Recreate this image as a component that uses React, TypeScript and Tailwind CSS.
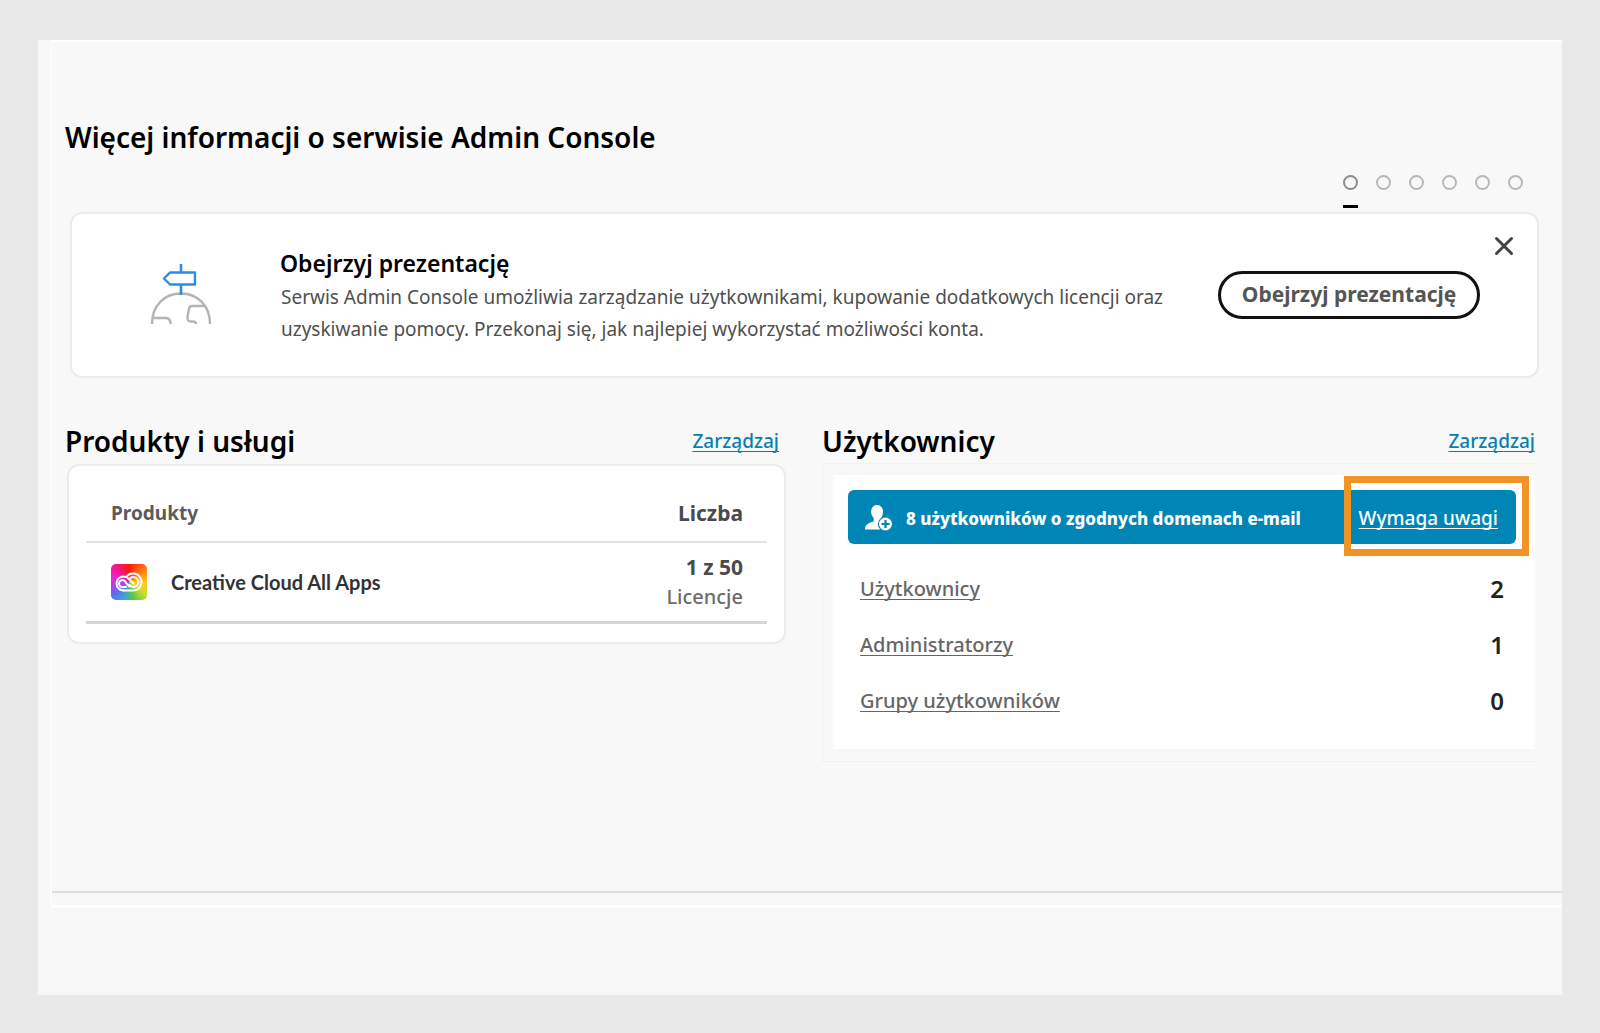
import React from 'react';
import { clsx } from 'clsx';

const SLIDES = ['1', '2', '3', '4', '5', '6'];

const USER_STATS = [
  { label: 'Użytkownicy', value: 2 },
  { label: 'Administratorzy', value: 1 },
  { label: 'Grupy użytkowników', value: 0 },
];

const SignpostIcon = () => (
  <svg className="w-[64px] h-[66px] mb-[2px] shrink-0" viewBox="0 0 64 66" fill="none" aria-hidden="true">
    <path d="M3 63C3 44 16 32.500 32 32.500S61 44 61 63" stroke="#b4b4b4" strokeWidth="2.400" />
    <path d="M4 57H17Q20 57 21 60L22 63" stroke="#b4b4b4" strokeWidth="2.400" />
    <path d="M56 45H43Q40.500 45 40 47.500L38.500 56Q38 60.500 42 60.500H44Q47 60.500 47 63" stroke="#b4b4b4" strokeWidth="2.400" />
    <path d="M32 3V11M32 24V34" stroke="#2d8ceb" strokeWidth="2.600" />
    <path d="M21 11.500H46V23.500H21L15 17.500Z" stroke="#2d8ceb" strokeWidth="2.400" strokeLinejoin="round" />
  </svg>
);

const CreativeCloudIcon = () => (
  <div className="w-9 h-9 shrink-0 rounded-[5px] overflow-hidden bg-[conic-gradient(from_0deg,#fb1a10,#ff6a10_12%,#fbc81c_25%,#d8dc28_34%,#58c84c_46%,#3fa0d8_56%,#5a6cf0_64%,#b83ce8_72%,#f020c8_82%,#f81470_91%,#fb1a10)]">
    <svg className="w-9 h-9" viewBox="0 0 36 36" fill="none" stroke="#fff" strokeWidth="2" strokeLinecap="round" aria-hidden="true">
      <path d="M12.500 26.500H22.500A8.500 8.500 0 1 0 15.500 12.500" />
      <path d="M12.500 26.500A7 7 0 0 1 12.500 12.500C15 12.500 16.500 13.500 18 15L22.500 19.500" />
      <path d="M18.500 22.500L15 19A3.500 3.500 0 1 0 12.500 23H15" />
      <path d="M18 15.500A5 5 0 1 1 22.500 23C20.500 23 19.500 22 18.500 21" />
    </svg>
  </div>
);

const UserAddIcon = () => (
  <svg className="w-7 h-7 shrink-0" viewBox="0 0 28 28" aria-hidden="true">
    <path
      d="M13 2C9.300 2 7.100 4.800 7.100 8.500C7.100 11.200 8.200 13.600 9.700 15V17.400C9.700 18.200 9.300 18.500 8.500 18.800C4 20.300 1 22 1 26.500H16.500V16C18 14.500 19 11.500 19 8.500C19 4.800 16.700 2 13 2Z"
      fill="#fff"
    />
    <circle cx="21.500" cy="21" r="7.600" fill="#0086b6" />
    <circle cx="21.500" cy="21" r="6.500" fill="#fff" />
    <path d="M21.500 17V25M17.500 21H25.500" stroke="#0086b6" strokeWidth="2.200" />
  </svg>
);

const SectionHeader = ({ title }: { title: string }) => (
  <div className="flex items-center justify-between">
    <h2 className="text-[28px] leading-9 font-semibold text-black">{title}</h2>
    <a
      href="#"
      className="text-[19px] leading-9 font-medium text-[#0a7fae] underline underline-offset-[3px] [text-decoration-skip-ink:none]"
    >
      Zarządzaj
    </a>
  </div>
);

const SlidePicker = () => (
  <div className="flex justify-end gap-[18px] pr-4">
    {SLIDES.map((slide, i) => (
      <button key={slide} aria-label={`Slajd ${slide}`} className="flex flex-col gap-[15px] w-[15px] h-[37px]">
        <span
          className={clsx(
            'w-[15px] h-[15px] rounded-full border-2',
            i === 0 ? 'border-[#8c8c8c]' : 'border-[#b8b8b8]'
          )}
        />
        {i === 0 && <span className="w-full h-[3px] bg-black" />}
      </button>
    ))}
  </div>
);

const TourCard = () => (
  <section className="relative flex items-center ml-[5px] h-[166px] pl-[77px] pr-[57px] rounded-xl border-2 border-[#ebebeb] bg-white">
    <SignpostIcon />
    <div className="flex-1 pt-[2px] ml-[67px]">
      <h2 className="text-[23px] leading-8 font-semibold text-black">Obejrzyj prezentację</h2>
      <p className="max-w-[900px] mt-[2px] pl-px text-[19px] leading-8 text-[#4f4f4f]">
        Serwis Admin Console umożliwia zarządzanie użytkownikami, kupowanie dodatkowych licencji oraz uzyskiwanie pomocy.
        Przekonaj się, jak najlepiej wykorzystać możliwości konta.
      </p>
    </div>
    <button className="w-[262px] h-12 shrink-0 rounded-full border-3 border-[#111] text-[21px] font-bold text-[#555]">
      Obejrzyj prezentację
    </button>
    <button aria-label="Zamknij" className="absolute top-5 right-[21px] p-[2px]">
      <svg className="w-5 h-5" viewBox="0 0 20 20" stroke="#444" strokeWidth="3" strokeLinecap="round">
        <path d="M2.500 2.500L17.500 17.500M17.500 2.500L2.500 17.500" />
      </svg>
    </button>
  </section>
);

const ProductsSection = () => (
  <section>
    <div className="pr-[7px]">
      <SectionHeader title="Produkty i usługi" />
    </div>
    <div className="mt-[5px] ml-[2px] px-[17px] pt-5 pb-[18px] rounded-xl border-2 border-[#ebebeb] bg-white">
      <table className="w-full border-collapse">
        <thead>
          <tr className="border-b-2 border-[#e1e1e1] leading-7">
            <th className="pt-[13px] pb-[14px] pl-[25px] text-left text-[19px] font-bold text-[#5c5c5c]">Produkty</th>
            <th className="pt-[13px] pb-[14px] pr-6 text-right text-[21px] font-bold text-[#4b4b4b]">Liczba</th>
          </tr>
        </thead>
        <tbody>
          <tr className="border-b-3 border-[#d5d5d5]">
            <td className="pl-[25px]">
              <div className="flex items-center gap-6">
                <CreativeCloudIcon />
                <span className="font-['Lato'] text-[20px] font-bold text-[#333]">Creative Cloud All Apps</span>
              </div>
            </td>
            <td className="pt-[9px] pb-[9px] pr-6 text-right leading-[30px]">
              <div className="text-[21px] font-bold text-[#4b4b4b]">1 z 50</div>
              <div className="text-[20px] font-medium text-[#6b6b6b]">Licencje</div>
            </td>
          </tr>
        </tbody>
      </table>
    </div>
  </section>
);

const UsersSection = () => (
  <section>
    <SectionHeader title="Użytkownicy" />
    <div className="mt-1 pl-[10px] pt-[11px] pb-3 border-l border-y border-[#f1f1f1]">
      <div className="pt-[15px] pb-5 bg-white">
        <div className="relative flex items-center ml-[15px] mr-[19px] h-[54px] pl-4 pr-[18px] rounded-md bg-[#0086b6]">
          <UserAddIcon />
          <p className="flex-1 pt-1 ml-[14px] text-[17px] font-extrabold text-white">
            8 użytkowników o zgodnych domenach e-mail
          </p>
          <a
            href="#"
            className="pt-[2px] text-[19px] font-medium text-white underline underline-offset-[3px] [text-decoration-skip-ink:none]"
          >
            Wymaga uwagi
          </a>
          {/* Highlight around the link */}
          <div className="absolute -top-[14px] -bottom-3 -right-[13px] w-[185px] border-7 border-[#f19425]" />
        </div>
        <ul className="pt-[17px] pl-[27px] pr-[31px]">
          {USER_STATS.map(stat => (
            <li key={stat.label} className="flex items-center justify-between h-14">
              <a
                href="#"
                className="text-[20px] font-medium text-[#666] underline decoration-1 underline-offset-[3px] [text-decoration-skip-ink:none]"
              >
                {stat.label}
              </a>
              <span className="text-[24px] font-semibold text-[#222]">{stat.value}</span>
            </li>
          ))}
        </ul>
      </div>
    </div>
  </section>
);

export default function App() {
  return (
    <div className="flex flex-col min-h-screen px-[38px] pt-10 pb-[38px] bg-[#e9e9e9] font-['Noto_Sans',sans-serif]">
      <main className="flex-1 pl-[13px] bg-[#f8f8f8]">
        <div className="border-l border-t-2 border-b-3 border-white pb-3">
          <div className="pt-[77px] pb-[129px] pl-[13px] pr-[23px] border-b-2 border-[#dedede]">
            <h1 className="text-[28px] leading-9 font-semibold text-black">Więcej informacji o serwisie Admin Console</h1>
            <div className="mt-5">
              <SlidePicker />
            </div>
            <TourCard />
            <div className="grid grid-cols-[721fr_713fr] gap-9 mt-[45px] pr-1">
              <ProductsSection />
              <UsersSection />
            </div>
          </div>
        </div>
      </main>
    </div>
  );
}
